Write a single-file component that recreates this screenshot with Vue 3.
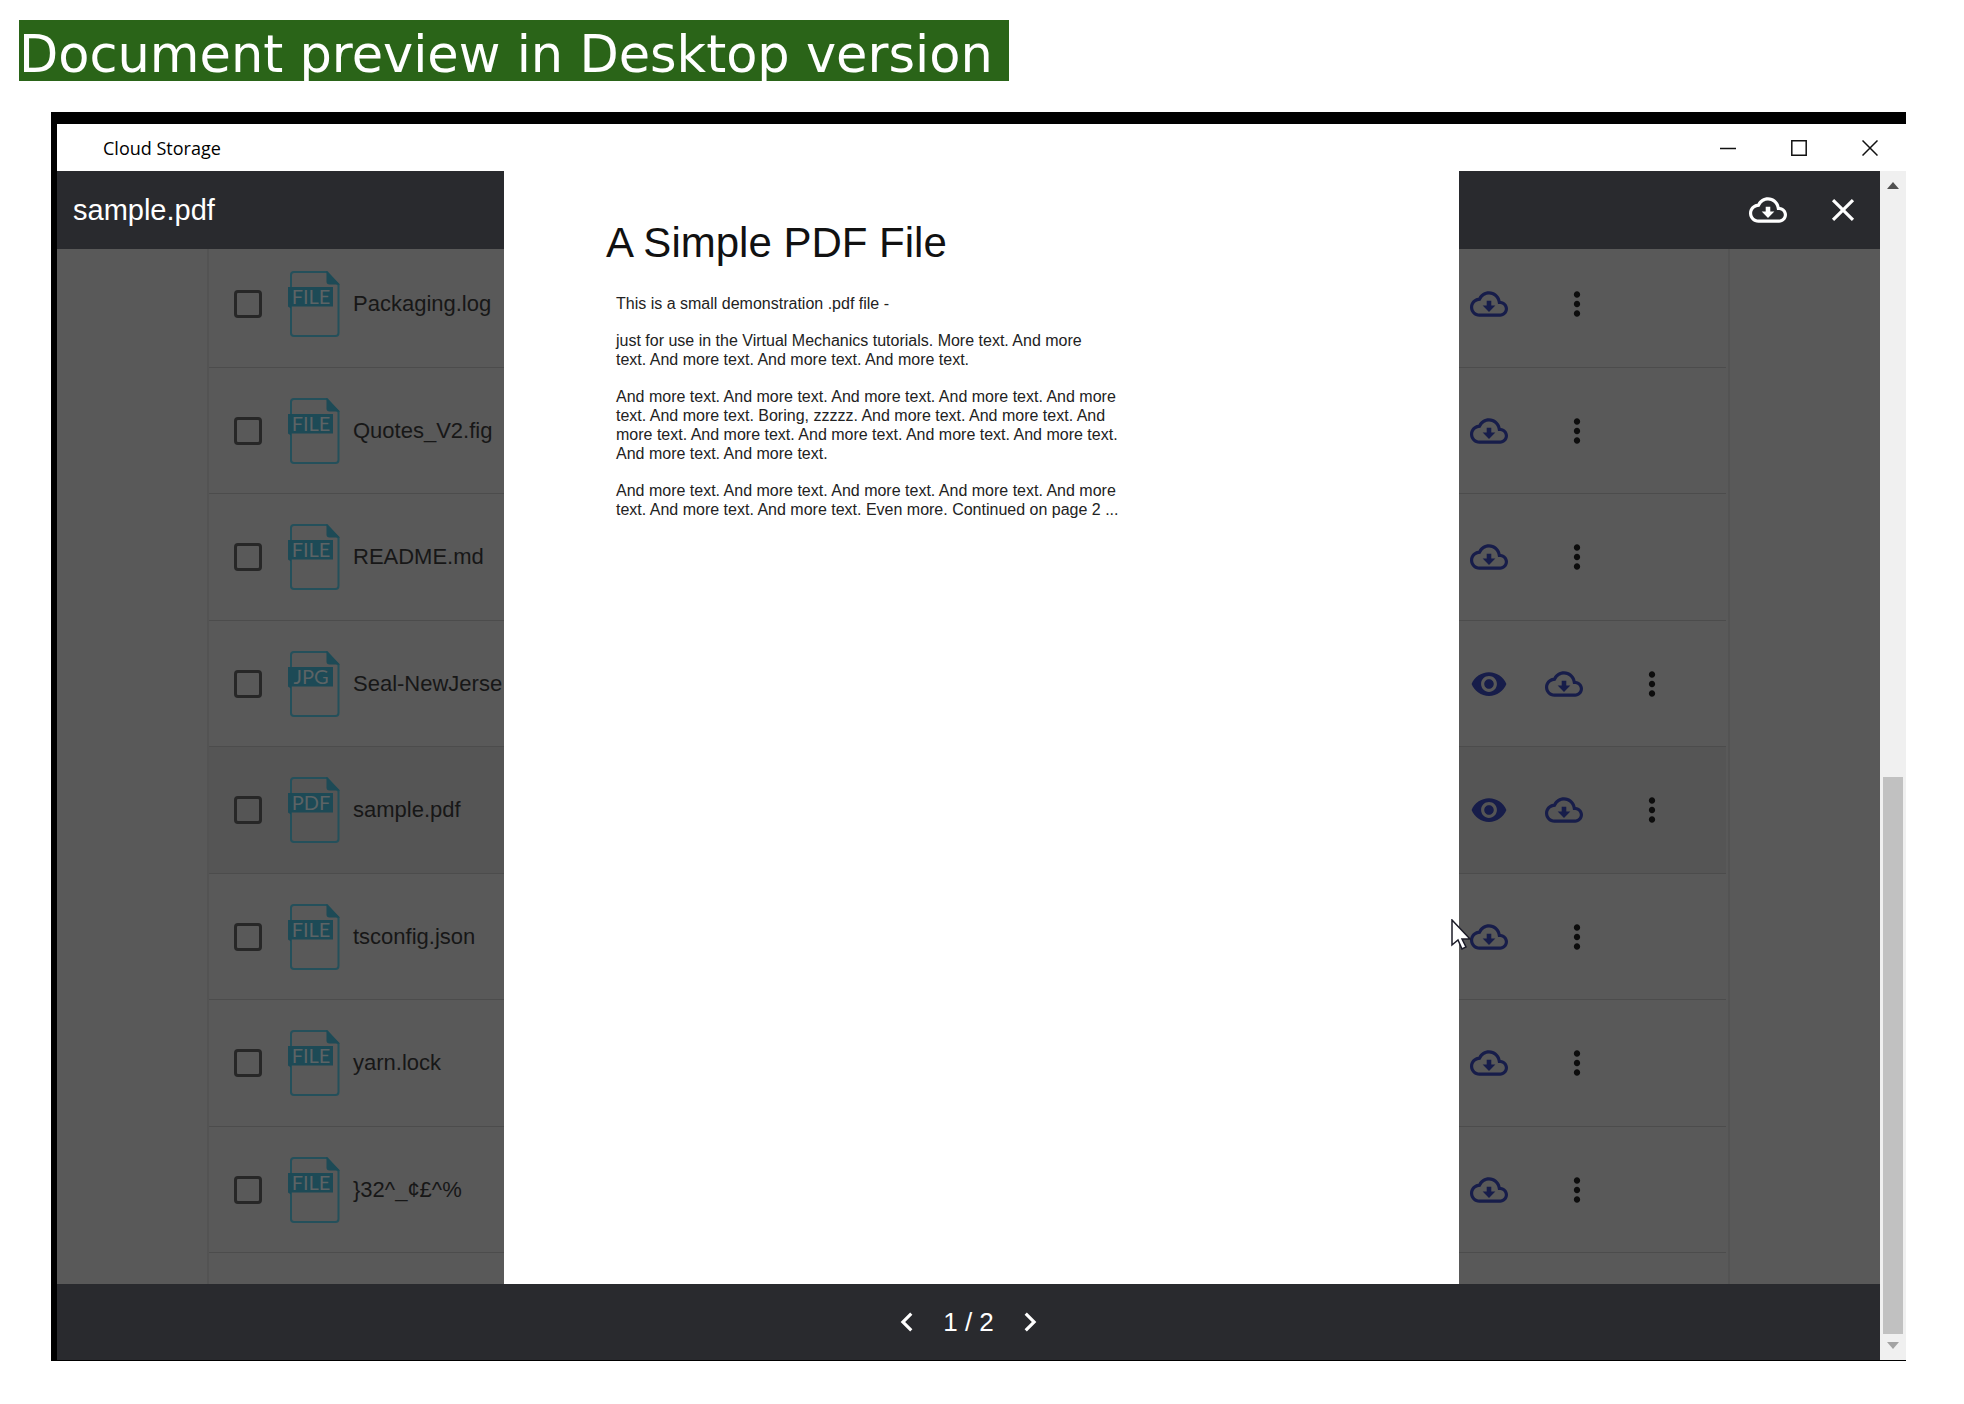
<script setup>
import { ref } from 'vue'

const files = ref([
  { name: 'Packaging.log', type: 'FILE' },
  { name: 'Quotes_V2.fig', type: 'FILE' },
  { name: 'README.md', type: 'FILE' },
  { name: 'Seal-NewJerse', type: 'JPG', preview: true },
  { name: 'sample.pdf', type: 'PDF', preview: true, active: true },
  { name: 'tsconfig.json', type: 'FILE' },
  { name: 'yarn.lock', type: 'FILE' },
  { name: '}32^_¢£^%', type: 'FILE' },
])

const paragraphs = [
  ['This is a small demonstration .pdf file -'],
  [
    'just for use in the Virtual Mechanics tutorials. More text. And more',
    'text. And more text. And more text. And more text.',
  ],
  [
    'And more text. And more text. And more text. And more text. And more',
    'text. And more text. Boring, zzzzz. And more text. And more text. And',
    'more text. And more text. And more text. And more text. And more text.',
    'And more text. And more text.',
  ],
  [
    'And more text. And more text. And more text. And more text. And more',
    'text. And more text. And more text. Even more. Continued on page 2 ...',
  ],
]

const icons = {
  cloud:
    'M19.35 10.04C18.67 6.59 15.64 4 12 4 9.11 4 6.6 5.64 5.35 8.04 2.34 8.36 0 10.91 0 14c0 3.31 2.69 6 6 6h13c2.76 0 5-2.24 5-5 0-2.64-2.05-4.78-4.65-4.96zM19 18H6c-2.21 0-4-1.79-4-4 0-2.05 1.53-3.76 3.56-3.97l1.07-.11.5-.95C8.08 7.14 9.94 6 12 6c2.62 0 4.88 1.86 5.39 4.43l.3 1.5 1.53.11c1.56.1 2.78 1.41 2.78 2.96 0 1.65-1.35 3-3 3zM13.45 10h-2.9v3H8l4 4 4-4h-2.55z',
  eye: 'M12 4.5C7 4.5 2.73 7.61 1 12c1.73 4.39 6 7.5 11 7.5s9.27-3.11 11-7.5c-1.73-4.39-6-7.5-11-7.5zM12 17c-2.76 0-5-2.24-5-5s2.24-5 5-5 5 2.24 5 5-2.24 5-5 5zm0-8c-1.66 0-3 1.34-3 3s1.34 3 3 3 3-1.34 3-3-1.34-3-3-3z',
  more: 'M12 8c1.1 0 2-.9 2-2s-.9-2-2-2-2 .9-2 2 .9 2 2 2zm0 2c-1.1 0-2 .9-2 2s.9 2 2 2 2-.9 2-2-.9-2-2-2zm0 6c-1.1 0-2 .9-2 2s.9 2 2 2 2-.9 2-2-.9-2-2-2z',
  close:
    'M19 6.41L17.59 5 12 10.59 6.41 5 5 6.41 10.59 12 5 17.59 6.41 19 12 13.41 17.59 19 19 17.59 13.41 12z',
  prev: 'M15.41 7.41L14 6l-6 6 6 6 1.41-1.41L10.83 12z',
  next: 'M10 6L8.59 7.41 13.17 12l-4.58 4.59L10 18l6-6z',
}
</script>

<template>
  <div class="slide">
    <h1 class="heading"><span>Document preview in Desktop version </span></h1>

    <section class="window">
      <header class="titlebar">
        <span class="app-name">Cloud Storage</span>
        <div class="controls">
          <button type="button" aria-label="Minimize">
            <svg viewBox="0 0 16 16"><path d="M0 8.5h16" /></svg>
          </button>
          <button type="button" aria-label="Maximize">
            <svg viewBox="0 0 16 16"><path d="M.8.8h14.4v14.4H.8z" /></svg>
          </button>
          <button type="button" aria-label="Close window">
            <svg viewBox="0 0 16 16"><path d="M.5.5l15 15M15.5.5l-15 15" /></svg>
          </button>
        </div>
      </header>

      <div class="body">
        <main class="app">
          <ul class="files">
            <li v-for="(file, i) in files" :key="file.name" class="row" :class="{ active: file.active }">
              <input :id="'file-' + i" type="checkbox" />
              <svg class="file-icon" viewBox="0 0 52 66">
                <path class="outline" d="M39 1H6a3 3 0 0 0-3 3v58a3 3 0 0 0 3 3h41.500a3 3 0 0 0 3-3V14z" />
                <path class="fill" d="M38.500 0L52 13.500H41.500a3 3 0 0 1-3-3z" />
                <path class="fill" d="M0 16h45v19.500H3v2L0 35.500z" />
                <text x="23" y="33" text-anchor="middle">{{ file.type }}</text>
              </svg>
              <label :for="'file-' + i">{{ file.name }}</label>
              <div class="actions">
                <button v-if="file.preview" type="button" aria-label="Preview">
                  <svg viewBox="0 0 24 24"><path :d="icons.eye" /></svg>
                </button>
                <button type="button" aria-label="Download">
                  <svg viewBox="0 0 24 24"><path :d="icons.cloud" /></svg>
                </button>
                <button type="button" class="more" aria-label="More">
                  <svg viewBox="0 0 24 24"><path :d="icons.more" /></svg>
                </button>
              </div>
            </li>
          </ul>
        </main>

        <div class="viewer">
          <header class="viewer-bar">
            <h2>sample.pdf</h2>
            <button type="button" aria-label="Download">
              <svg viewBox="0 0 24 24"><path :d="icons.cloud" /></svg>
            </button>
            <button type="button" aria-label="Close">
              <svg viewBox="0 0 24 24"><path :d="icons.close" /></svg>
            </button>
          </header>

          <article class="sheet">
            <h3>A Simple PDF File</h3>
            <p v-for="(lines, p) in paragraphs" :key="p">
              <span v-for="line in lines" :key="line">{{ line }}</span>
            </p>
            <svg class="cursor" viewBox="0 0 20 32">
              <path d="M1 1v25l6-5 4 9 4-2-4-8h8z" />
            </svg>
          </article>

          <footer class="pager">
            <button type="button" aria-label="Previous page">
              <svg viewBox="0 0 24 24"><path :d="icons.prev" /></svg>
            </button>
            <span>1 / 2</span>
            <button type="button" aria-label="Next page">
              <svg viewBox="0 0 24 24"><path :d="icons.next" /></svg>
            </button>
          </footer>
        </div>

        <div class="scrollbar">
          <svg class="arrow up" viewBox="0 0 12 7"><path d="M0 7l6-7 6 7z" /></svg>
          <div class="track"><div class="thumb"></div></div>
          <svg class="arrow down" viewBox="0 0 12 7"><path d="M0 0l6 7 6-7z" /></svg>
        </div>
      </div>
    </section>
  </div>
</template>

<style>
body {
  margin: 0;
  background: #fff;
}
</style>

<style scoped>
* {
  box-sizing: border-box;
}

.slide {
  display: flex;
  flex-direction: column;
  min-height: 100vh;
  padding: 20px 58px 43px 19px;
  font-family: 'Liberation Sans', Arial, sans-serif;
}

button {
  display: flex;
  align-items: center;
  justify-content: center;
  flex: none;
  padding: 0;
  border: 0;
  background: none;
  color: inherit;
}

button svg {
  width: 38px;
  height: 38px;
  fill: currentColor;
}

.heading {
  display: flex;
  margin: 0 0 31px;
  font: 400 51px/53px 'DejaVu Sans', Verdana, sans-serif;
  color: #fff;
}

.heading span {
  padding-top: 8px;
  background: #2a6418;
  white-space: pre;
}

.window {
  display: flex;
  flex: 1;
  flex-direction: column;
  margin-left: 32px;
  border: solid #000;
  border-width: 12px 0 1px 6px;
}

.titlebar {
  display: flex;
  flex: none;
  align-items: center;
  justify-content: space-between;
  height: 47px;
  padding: 0 1px 0 46px;
  background: #fff;
  color: #000;
}

.app-name {
  font: 18px/24px 'Open Sans', 'Noto Sans', sans-serif;
}

.controls {
  display: flex;
}

.controls button {
  width: 71px;
  height: 45px;
}

.controls svg {
  width: 16px;
  height: 16px;
  fill: none;
  stroke: #111;
  stroke-width: 1.5;
}

.body {
  display: grid;
  flex: 1;
  grid-template-columns: minmax(0, 1fr) 26px;
  grid-template-rows: minmax(0, 1fr);
}

.app,
.viewer {
  grid-area: 1 / 1;
}

.app {
  display: flex;
  overflow: hidden;
  padding: 0 150px;
  background: #595959;
}

.files {
  flex: 1;
  margin: 0;
  padding: 70px 2px 0 0;
  border: solid #535353;
  border-width: 0 2px;
  list-style: none;
}

.row {
  display: flex;
  align-items: center;
  height: 127px;
  padding-left: 25px;
  border-bottom: 1px solid #4c4c4c;
}

.row:nth-child(even) {
  height: 126px;
}

.row.active {
  background: #555;
}

.row input {
  appearance: none;
  flex: none;
  width: 28px;
  height: 28px;
  margin: 0;
  border: 3px solid #272727;
  border-radius: 4px;
}

.file-icon {
  flex: none;
  width: 52px;
  height: 66px;
  margin: 0 13px 0 26px;
}

.outline {
  fill: none;
  stroke: #24505b;
  stroke-width: 2;
}

.fill {
  fill: #1d4a56;
}

.file-icon text {
  fill: #5c6365;
  font: 20px Lato, 'Open Sans', sans-serif;
}

.row label {
  flex: 1;
  color: #171717;
  font-size: 22px;
  line-height: 28px;
}

.actions {
  display: flex;
  width: 275px;
  color: #171d4a;
}

.actions button {
  width: 75px;
  height: 75px;
}

.actions .more {
  margin-left: 13px;
  color: #0d0d0d;
}

.viewer {
  display: grid;
  grid-template-columns: 447fr 955fr 421fr;
  grid-template-rows: 78px minmax(0, 1fr) 76px;
  z-index: 1;
}

.viewer-bar {
  display: flex;
  grid-area: 1 / 1 / 2 / -1;
  align-items: center;
  padding-left: 16px;
  background: #292a2e;
  color: #fff;
}

.viewer-bar h2 {
  flex: 1;
  margin: 0;
  font-weight: 400;
  font-size: 29px;
  line-height: 36px;
}

.viewer-bar button {
  width: 75px;
  height: 75px;
}

.sheet {
  position: relative;
  grid-area: 1 / 2 / 3 / 3;
  padding: 48px 100px 0 112px;
  background: #fff;
  color: #111;
}

.sheet h3 {
  margin: 0 0 27px -10px;
  font-weight: 400;
  font-size: 42px;
  line-height: 48px;
}

.sheet p {
  margin: 0 0 18px;
  color: #222;
  font-size: 16px;
  line-height: 19px;
}

.sheet p span {
  display: block;
  white-space: nowrap;
}

.cursor {
  position: absolute;
  top: 748px;
  right: -12px;
  width: 20px;
  height: 32px;
  fill: #fff;
  stroke: #1c1c28;
  stroke-width: 1.5;
}

.pager {
  display: flex;
  grid-area: 3 / 1 / 4 / -1;
  align-items: center;
  justify-content: center;
  gap: 17px;
  background: #292a2e;
  color: #fff;
  font-size: 26px;
  line-height: 32px;
}

.scrollbar {
  display: flex;
  flex-direction: column;
  align-items: center;
  padding: 11px 3px;
  background: #f0f0f0;
}

.arrow {
  flex: none;
  width: 12px;
  height: 7px;
}

.up {
  fill: #505050;
}

.down {
  fill: #a3a3a3;
}

.track {
  display: flex;
  flex: 1;
  flex-direction: column;
  justify-content: flex-end;
  width: 100%;
  padding: 8px 0;
}

.thumb {
  height: 49%;
  background: #c1c1c1;
}
</style>
